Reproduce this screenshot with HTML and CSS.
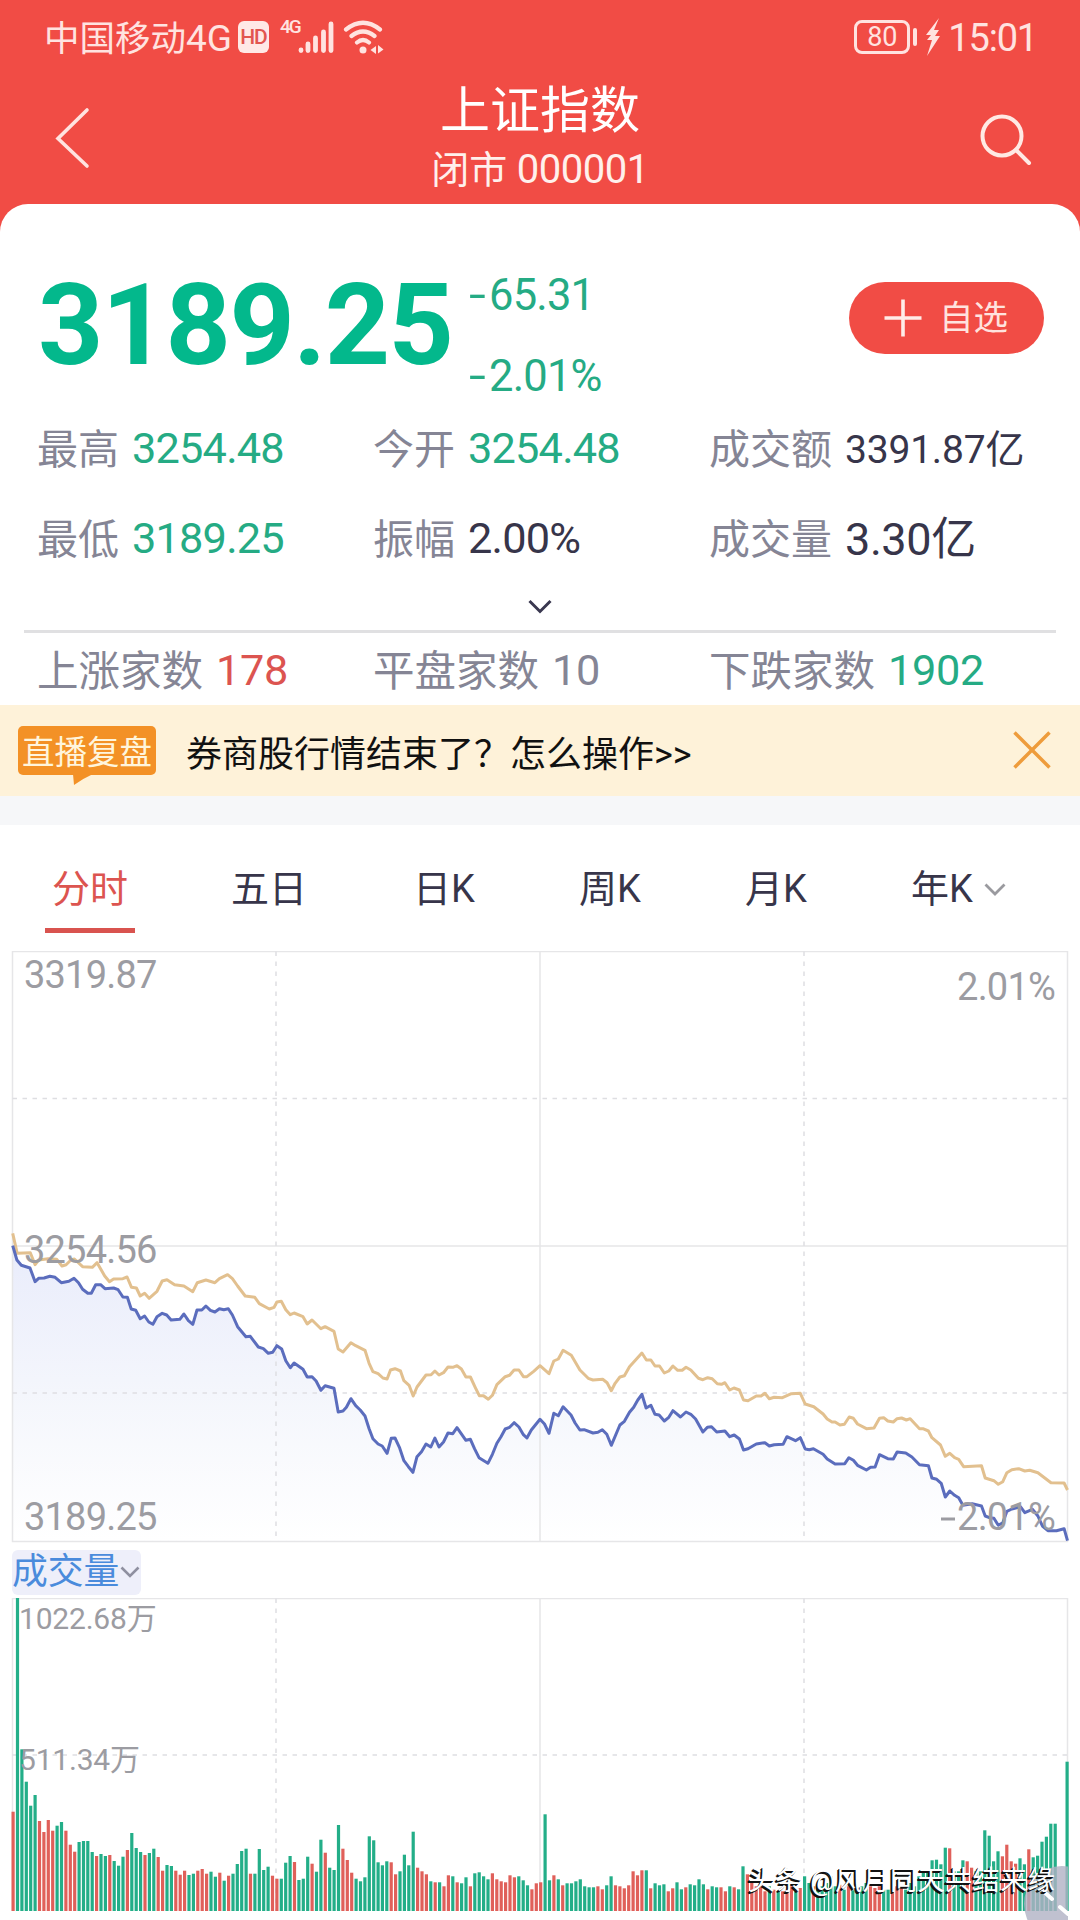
FILE: index.html
```html
<!DOCTYPE html>
<html lang="zh-CN">

<head>
    <meta charset="UTF-8">
    <meta name="viewport" content="width=device-width, initial-scale=1.0">
    <title>上证指数</title>
    <link rel="stylesheet" href="styles.css">
</head>

<body>
    <div class="status">
        <span class="carrier">中国移动<span>4G</span></span>
        <span class="hd">HD</span>
        <span class="net">4G</span>
        <svg class="signal" width="36" height="34" viewBox="0 0 36 34" stroke="#ffe3e0" stroke-width="4.8" stroke-linecap="round">
            <path d="M3 30.5v-0.5M10 30.5V24M17.5 30.5V18M25.5 30.5V12M33 30.5V4" />
        </svg>
        <svg class="wifi" width="42" height="36" viewBox="0 0 42 36" fill="none" stroke="#ffe3e0" stroke-width="4.2" stroke-linecap="round">
            <path d="M3 10.500Q20 -3 37 10.500M8.500 17Q20 8 31.500 17M14 23.500Q20 18.500 26 23.500" />
            <circle cx="20" cy="31" r="3.500" fill="#ffe3e0" stroke="none" />
            <path d="M33 27v8l-5.500-4zM35 26v8.500l5.500-4z" fill="#ffe3e0" stroke="none" />
        </svg>
        <span class="battery">80</span>
        <span class="nub"></span>
        <svg class="bolt" width="16" height="38" viewBox="0 0 16 38" fill="#ffe3e0">
            <path d="M14 0L1 17h5l-4 5h5L2 38 15 18h-5l4-6H9z" />
        </svg>
        <span class="clock">15:01</span>
    </div>

    <header class="header">
        <svg class="back" width="36" height="62" viewBox="0 0 36 62" fill="none" stroke="#ffe3e0" stroke-width="3.6" stroke-linecap="round">
            <path d="M32 3L3 31.500L32 59" />
        </svg>
        <div class="title">
            <h1>上证指数</h1>
            <p>闭市 <span>000001</span></p>
        </div>
        <svg class="search" width="54" height="54" viewBox="0 0 54 54" fill="none" stroke="#ffe9e4" stroke-width="4" stroke-linecap="round">
            <circle cx="22" cy="22" r="19.500" />
            <path d="M36 36L49 49" />
        </svg>
    </header>

    <main>
        <section class="quote">
            <div class="price-row">
                <span class="price">3189.25</span>
                <div class="change">
                    <span><i>-</i>65.31</span>
                    <span><i>-</i>2.01%</span>
                </div>
                <div class="add">
                    <svg width="38" height="38" viewBox="0 0 38 38" stroke="#ffece8" stroke-width="3.6">
                        <path d="M0.500 19H37.500M19 0.500V37.500" />
                    </svg>
                    自选
                </div>
            </div>
            <div class="grid">
                <div><label>最高</label><b class="green">3254.48</b></div>
                <div><label>今开</label><b class="green">3254.48</b></div>
                <div><label>成交额</label><b class="amount">3391.87亿</b></div>
                <div><label>最低</label><b class="green">3189.25</b></div>
                <div><label>振幅</label><b>2.00%</b></div>
                <div><label>成交量</label><b class="volume">3.30亿</b></div>
            </div>
            <svg class="more" width="24" height="16" viewBox="0 0 24 16" fill="none" stroke="#3a3850" stroke-width="3">
                <path d="M1.500 2L12 12.500L22.500 2" />
            </svg>
            <div class="line"></div>
            <div class="grid count">
                <div><label>上涨家数</label><b class="red">178</b></div>
                <div><label>平盘家数</label><b class="gray">10</b></div>
                <div><label>下跌家数</label><b class="green">1902</b></div>
            </div>
        </section>

        <section class="banner">
            <span class="live">直播复盘
                <svg width="20" height="12" viewBox="0 0 20 12" fill="#f39126">
                    <path d="M0 0H20Q9 5 1 11z" />
                </svg>
            </span>
            <span class="msg">券商股行情结束了？怎么操作&gt;&gt;</span>
            <svg class="close" width="38" height="38" viewBox="0 0 38 38" stroke="#ee9c3c" stroke-width="3.500">
                <path d="M1.500 1.500L36.500 36.500M36.500 1.500L1.500 36.500" />
            </svg>
        </section>

        <nav class="tabs">
            <span class="on">分时</span>
            <span>五日</span>
            <span>日K</span>
            <span>周K</span>
            <span>月K</span>
            <span>年K<svg width="22" height="14" viewBox="0 0 22 14" fill="none" stroke="#9a9a9f" stroke-width="2.800">
                    <path d="M1.500 1.500L11 11L20.500 1.500" />
                </svg></span>
        </nav>

        <svg class="chart" width="1080" height="592" viewBox="0 0 1080 592">
            <defs>
                <linearGradient id="fade" gradientUnits="userSpaceOnUse" x1="0" y1="294" x2="0" y2="590">
                    <stop offset="0" stop-color="#e9ecfb" />
                    <stop offset="0.500" stop-color="#f4f6fc" />
                    <stop offset="1" stop-color="#ffffff" />
                </linearGradient>
            </defs>
            <path id="area" fill="url(#fade)" />
            <rect class="frame" x="12.500" y="0.500" width="1055" height="590" />
            <path class="frame" d="M12.500 295H1067.500M540 0.500V590" />
            <path class="dash" d="M12.500 147.500H1067.500M12.500 442H1067.500M276 0.500V590M804 0.500V590" />
            <polyline id="avg" class="avg" />
            <polyline id="now" class="now" />
            <g class="axis">
                <text x="24" y="37">3319.87</text>
                <text x="24" y="312">3254.56</text>
                <text x="24" y="579">3189.25</text>
                <text x="1055" y="49" text-anchor="end">2.01%</text>
                <text x="1055" y="579" text-anchor="end">2.01%</text>
                <path d="M941 568H955" stroke="#9c9ca2" stroke-width="3" />
            </g>
        </svg>

        <div class="vol-name">
            <div>成交量<svg width="20" height="13" viewBox="0 0 20 13" fill="none" stroke="#8f90a0" stroke-width="2.600">
                    <path d="M1.500 1.500L10 10L18.500 1.500" />
                </svg></div>
        </div>

        <svg class="vol-chart" width="1080" height="322" viewBox="0 0 1080 322">
            <path class="frame" d="M12.500 313V0.500H1067.500V313M540 0.500V313" />
            <path class="dash" d="M12.500 157H1067.500M276 0.500V313M804 0.500V313" />
            <g id="bars"></g>
            <g class="axis small">
                <text x="19" y="31">1022.68万</text>
                <text x="19" y="172">511.34万</text>
            </g>
        </svg>
    </main>

    <div class="float">
        <svg width="44" height="54" viewBox="0 0 44 54" stroke="#fff" stroke-width="4" stroke-linecap="round">
            <circle cx="38" cy="38" r="38" fill="#b0b1c4" fill-opacity="0.800" stroke="none" />
            <path d="M18 24L28 33M36 41L44 48" />
        </svg>
    </div>
    <div class="mark">头条 @风月同天共结来缘</div>

    <script src="chart.js"></script>
</body>

</html>
```
FILE: styles.css
```css
* {
    margin: 0;
    padding: 0;
    box-sizing: border-box;
}

body {
    width: 1080px;
    height: 1920px;
    overflow: hidden;
    position: relative;
    background-color: #f14c45;
    font-family: Roboto, "Noto Sans CJK SC", sans-serif;
}

svg {
    display: block;
    flex-shrink: 0;
}

/* 状态栏 */
.status {
    height: 74px;
    padding: 0 43px 0 44px;
    display: flex;
    align-items: center;
    color: #ffe3e0;
}

.carrier {
    width: 194px;
    padding-top: 3px;
    font-size: 35.500px;
    line-height: 74px;
    white-space: nowrap;
}

.carrier span {
    font-size: 37px;
}

.hd {
    width: 31px;
    height: 32px;
    border-radius: 6px;
    background-color: #ffe9e6;
    color: #e2564f;
    font-size: 21px;
    font-weight: 500;
    line-height: 33px;
    letter-spacing: -1px;
    text-align: center;
}

.net {
    width: 18px;
    margin: 0 0 22px 11px;
    font-size: 19px;
    line-height: 19px;
    font-weight: 500;
    letter-spacing: -2px;
}

.wifi {
    margin-left: 9px;
}

.battery {
    width: 56px;
    height: 34px;
    margin-left: auto;
    border: 3px solid #ffe3e0;
    border-radius: 8px;
    font-size: 27px;
    line-height: 29px;
    text-align: center;
}

.nub {
    width: 4px;
    height: 18px;
    margin: 0 8px 0 3px;
    border-radius: 2px;
    background-color: #ffe3e0;
}

.clock {
    margin-left: 7px;
    padding-top: 2px;
    font-size: 38px;
    letter-spacing: -1.2px;
}

/* 标题栏 */
.header {
    height: 130px;
    padding: 0 46px 0 55px;
    display: flex;
    align-items: flex-start;
    justify-content: space-between;
    color: #fff;
}

.back {
    margin-top: 33px;
}

.title {
    text-align: center;
    padding-left: 9px;
}

.title h1 {
    font-size: 50px;
    font-weight: 400;
    line-height: 70px;
    padding-top: 2px;
}

.title p {
    font-size: 38px;
    line-height: 48px;
    color: #fff0ec;
}

.title p span {
    font-size: 40px;
    letter-spacing: -0.5px;
}

.search {
    margin-top: 40px;
}

/* 报价 */
.quote {
    height: 501px;
    padding-top: 65px;
    border-radius: 28px 28px 0 0;
    background-color: #fff;
}

.price-row {
    height: 143px;
    display: flex;
}

.price {
    width: 432px;
    padding-left: 38px;
    font-size: 114px;
    font-weight: 700;
    line-height: 112px;
    letter-spacing: -1.6px;
    color: #03b88c;
}

.change {
    width: 379px;
    padding-left: 37px;
    font-size: 43.500px;
    line-height: 81px;
    margin-top: -14px;
    letter-spacing: -0.8px;
    color: #25ab84;
}

.change span {
    display: block;
}

.change i {
    display: inline-block;
    width: 20px;
    font-style: normal;
    transform: scaleX(1.4);
    transform-origin: left;
}

.add {
    width: 195px;
    height: 72px;
    margin: 13px 0 0 38px;
    padding-left: 35px;
    border-radius: 36px;
    background-color: #f14c45;
    color: #ffe3de;
    display: flex;
    align-items: center;
    gap: 17px;
    font-size: 34.500px;
    line-height: 70px;
}

.grid {
    padding-left: 37px;
    display: grid;
    grid-template-columns: 336px 336px 1fr;
    grid-auto-rows: 90px;
}

.grid div {
    height: 74px;
    display: flex;
    align-items: center;
    line-height: 74px;
    white-space: nowrap;
}

.grid label {
    margin: 2px 13px 0 0;
    font-size: 41px;
    color: #858595;
}

.grid b {
    font-size: 43.300px;
    font-weight: 400;
    letter-spacing: -0.8px;
    color: #37354a;
}

.grid .amount {
    padding-top: 1px;
    font-size: 39px;
    letter-spacing: -0.2px;
}

.grid .volume {
    padding-top: 1px;
    font-size: 45px;
    letter-spacing: -0.4px;
}

.grid .green {
    color: #25ab84;
}

.grid .red {
    color: #dc5450;
}

.grid .gray {
    color: #858595;
}

.more {
    margin: 7px auto 0;
}

.line {
    height: 3px;
    margin: 15px 24px 0;
    background-color: #e0e0e2;
}

.count {
    padding-top: 1px;
    grid-auto-rows: 72px;
}

.count label {
    margin-top: 1px;
    font-size: 41.500px;
}

.count b {
    letter-spacing: -0.3px;
}

/* 直播提示 */
.banner {
    height: 91px;
    padding: 0 29px 0 18px;
    display: flex;
    align-items: center;
    background-color: #fef2d9;
}

.live {
    position: relative;
    width: 138px;
    height: 49px;
    border-radius: 5px;
    background-color: #f39126;
    color: #fff5dc;
    font-size: 32.500px;
    line-height: 54px;
    text-align: center;
    white-space: nowrap;
}

.live svg {
    position: absolute;
    left: 55px;
    top: 48px;
}

.msg {
    flex: 1;
    margin-left: 30px;
    font-size: 36px;
    color: #111;
}

.close {
    margin-top: -2px;
}

/* 周期切换 */
.tabs {
    height: 155px;
    border-top: 29px solid #f6f7f9;
    padding-left: 45px;
    background-color: #fff;
    display: flex;
    font-size: 38px;
    line-height: 133px;
    color: #37354a;
}

.tabs span {
    width: 166px;
    padding: 3px 0 0 1px;
    display: flex;
    align-items: center;
}

.tabs .on {
    width: 90px;
    height: 108px;
    margin-right: 93px;
    padding: 26px 0 0 7px;
    border-bottom: 5px solid #d9534f;
    color: #dc5450;
}

.tabs .on + span {
    width: 184px;
    padding-left: 3px;
}

.tabs svg {
    margin-left: 11px;
}

/* 分时图 */
.chart {
    background-color: #fff;
}

.frame {
    fill: none;
    stroke: #e6e6e8;
    stroke-width: 1.500;
}

.dash {
    fill: none;
    stroke: #dedee2;
    stroke-width: 1.500;
    stroke-dasharray: 4.500 5.500;
}

.avg,
.now {
    fill: none;
    stroke: #e2c08f;
    stroke-width: 3;
    stroke-linejoin: round;
}

.now {
    stroke: #5b6dbd;
}

.axis {
    font-size: 38px;
    letter-spacing: -0.800px;
    fill: #9c9ca2;
}

.small {
    font-size: 30px;
    letter-spacing: -0.200px;
}

/* 成交量 */
.vol-name {
    height: 55px;
    padding: 7px 0 3px 12px;
    background-color: #fff;
}

.vol-name div {
    width: 129px;
    height: 45px;
    border-radius: 6px;
    background-color: #eeeffa;
    display: flex;
    align-items: center;
    font-size: 35.800px;
    line-height: 49px;
    color: #4a8bdc;
}

.vol-name svg {
    margin-left: 1px;
}

.vol-chart {
    background-color: #fff;
}

.up {
    fill: #e0605a;
}

.down {
    fill: #23ae88;
}

/* 悬浮按钮和水印 */
.float {
    position: absolute;
    left: 1024px;
    top: 1866px;
}

.mark {
    position: absolute;
    left: 748px;
    top: 1861px;
    font-size: 27.200px;
    line-height: 40px;
    letter-spacing: 0.350px;
    white-space: nowrap;
    color: #fff;
    text-shadow: -1px 1px 0 #111, -2px 2px 0 #111;
}
```
FILE: chart.js
```js
// 现价
var now = [37,107,49,150,62,166,87,174,102,215,112,205,128,204,145,199,160,202,178,218,200,214,215,205,228,218,240,238,255,250,265,250,278,224,292,224,305,236,330,234,343,239,357,261,370,262,381,297,394,301,407,326,420,318,432,336,444,343,456,320,471,310,484,315,497,330,522,328,534,312,547,332,560,343,572,300,586,300,598,288,611,301,624,306,637,296,650,299,663,296,675,315,690,350,714,380,727,379,750,411,765,416,779,430,792,427,804,407,818,417,830,452,843,473,854,459,880,478,892,501,906,500,918,513,932,541,944,527,970,535,982,606,996,603,1006,592,1019,566,1033,587,1046,600,1060,618,1072,656,1083,686,1098,702,1110,708,1124,730,1136,685,1147,684,1160,712,1173,752,1186,770,1199,787,1211,740,1224,725,1237,702,1251,711,1263,684,1275,711,1288,696,1301,669,1315,671,1327,653,1353,691,1366,688,1378,716,1391,743,1417,760,1430,733,1443,700,1455,680,1467,657,1480,652,1493,638,1507,651,1520,674,1530,684,1543,660]
var now2 = [0,328,13,342,26,370,40,310,53,317,67,290,90,315,102,339,116,360,128,359,154,369,168,367,181,359,194,373,207,406,232,345,245,334,260,307,272,292,284,270,296,253,308,294,322,286,334,313,346,315,361,333,374,322,386,302,408,321,424,306,438,313,452,327,473,366,486,352,498,350,513,366,537,363,551,380,564,375,579,387,591,420,604,416,628,402,653,398,666,408,680,404,706,403,717,380,742,392,756,383,770,417,782,419,794,416,822,433,834,447,857,462,885,461,897,443,910,451,922,466,948,480,960,472,973,471,986,434,1010,446,1026,447,1037,426,1062,429,1080,441,1102,464,1128,467,1138,504,1152,508,1165,520,1177,561,1190,543,1204,556,1216,563,1228,586,1255,581,1282,588,1293,618,1305,623,1318,625,1331,646,1344,638,1356,604,1370,597,1395,590,1408,608,1430,598,1446,618,1459,648,1475,662,1500,662,1522,656,1532,692]
// 均价
var avg = [37,70,50,130,88,128,102,164,112,150,140,146,165,148,180,168,192,164,206,150,216,147,240,170,268,172,282,158,304,198,318,215,330,207,357,206,369,201,382,232,396,234,407,258,420,250,433,265,456,244,471,213,485,209,507,224,534,228,560,245,573,218,598,210,624,218,637,206,661,194,675,206,690,228,712,258,740,262,753,281,782,297,796,292,804,276,817,274,830,299,843,314,854,309,880,320,892,342,906,330,932,356,944,350,970,364,982,417,996,426,1019,398,1033,407,1060,421,1072,460,1083,485,1098,491,1112,504,1124,507,1134,480,1147,476,1163,483,1173,512,1188,526,1200,558,1211,531,1237,495,1252,494,1263,483,1275,495,1288,488,1301,471,1315,472,1327,467,1340,477,1353,501,1366,501,1380,532,1392,557,1404,557,1418,568,1430,556,1443,524,1467,500,1480,496,1493,480,1507,480,1520,500,1530,500,1550,484]
var avg2 = [0,167,26,191,40,153,53,147,67,121,91,136,116,180,140,205,154,210,182,208,195,218,207,242,218,220,232,201,245,197,260,170,296,129,309,150,322,150,334,168,347,168,361,189,374,183,386,168,400,181,413,181,424,172,438,180,460,205,473,209,487,203,500,206,515,221,527,223,537,218,551,240,563,234,579,240,591,270,604,272,628,258,642,258,653,250,666,266,680,262,704,263,730,251,756,250,770,282,795,290,822,312,834,327,848,336,857,336,871,345,884,343,898,321,910,325,922,342,948,356,970,354,986,325,998,323,1010,333,1026,336,1037,326,1050,324,1064,330,1075,326,1102,356,1112,356,1128,363,1138,383,1163,405,1177,439,1190,430,1204,443,1216,448,1230,470,1282,467,1293,504,1318,512,1331,523,1344,515,1356,488,1370,479,1390,476,1408,483,1422,481,1446,488,1484,518,1522,519,1532,540]

function toPoints(am, pm) {
    var list = []
    for (var i = 0; i < am.length; i += 2) {
        list.push((am[i] / 2.904).toFixed(1) + ',' + (am[i + 1] / 3 + 259).toFixed(1))
    }
    for (var j = 0; j < pm.length; j += 2) {
        list.push((pm[j] / 2.904 + 540).toFixed(1) + ',' + (pm[j + 1] / 3 + 359).toFixed(1))
    }
    return list.join(' ')
}

var nowPoints = toPoints(now, now2)
document.getElementById('now').setAttribute('points', nowPoints)
document.getElementById('avg').setAttribute('points', toPoints(avg, avg2))
document.getElementById('area').setAttribute('d', 'M12.5,590 L' + nowPoints + ' L1067.5,590 Z')

// 成交量,r 为红 g 为绿
var vol = 'r298 g942 g485 g388 g316 g348 r270 r237 r273 r241 g256 g267 r241 r199 r178 g207 g210 g210 g177 r165 ' +
    'g171 g165 r168 g150 g136 g163 r183 g234 g189 g177 r168 g174 g187 r162 r121 g138 g135 r121 r109 r121 ' +
    'g108 g112 r121 r126 r112 g118 g103 r115 g91 r106 g112 g141 g180 g187 r112 g112 g186 g123 g133 r106 ' +
    'r97 g97 g145 g165 r147 g93 g97 g163 r142 g118 g214 r175 g130 g123 g258 r187 r153 r115 g97 g89 ' +
    'g101 g224 g212 g146 g137 g149 r146 r110 g119 g169 g137 g238 r130 r119 r110 g89 r86 g86 r74 r107 ' +
    'g104 r86 g83 g101 r74 g113 g116 g104 g95 r113 r95 r89 r86 r107 r101 g104 g92 g77 r65 r83 ' +
    'r86 g290 g92 r107 g95 r77 g83 g83 g89 g95 g74 g71 g71 r74 r65 g77 g104 r77 r74 r68 ' +
    'r77 r119 r107 r122 g122 r68 g83 g77 g80 r59 r68 g86 g65 r71 g80 g77 g95 g80 r65 g74 ' +
    'g71 r71 r59 g74 r71 g65 g134 r110 r84 r74 r74 r59 g74 r64 g59 r59 r64 r74 g59 r69 ' +
    'g104 g84 r74 g64 g74 g84 g104 g74 r79 g64 r74 g62 g64 g74 g84 r74 r69 r74 g64 g64 ' +
    'r69 r74 r74 g64 g84 g74 g104 g119 g114 g152 g154 g140 g190 r188 g119 g119 g152 r149 r130 g119 ' +
    'g119 g242 g226 g149 g179 r164 r199 r149 r142 g158 g140 r185 g161 g166 g208 g223 g262 g262 g0 g0 g448'
var html = ''
vol.split(' ').forEach(function (item, i) {
    var h = item.slice(1) / 3
    var x = 11.5 + i * 4.397
    if (i == 240) x = 1065.5
    html += '<rect class="' + (item[0] == 'r' ? 'up' : 'down') + '" x="' + x.toFixed(1) +
        '" y="' + (313 - h).toFixed(1) + '" width="3.2" height="' + h.toFixed(1) + '"/>'
})
document.getElementById('bars').innerHTML = html
```
